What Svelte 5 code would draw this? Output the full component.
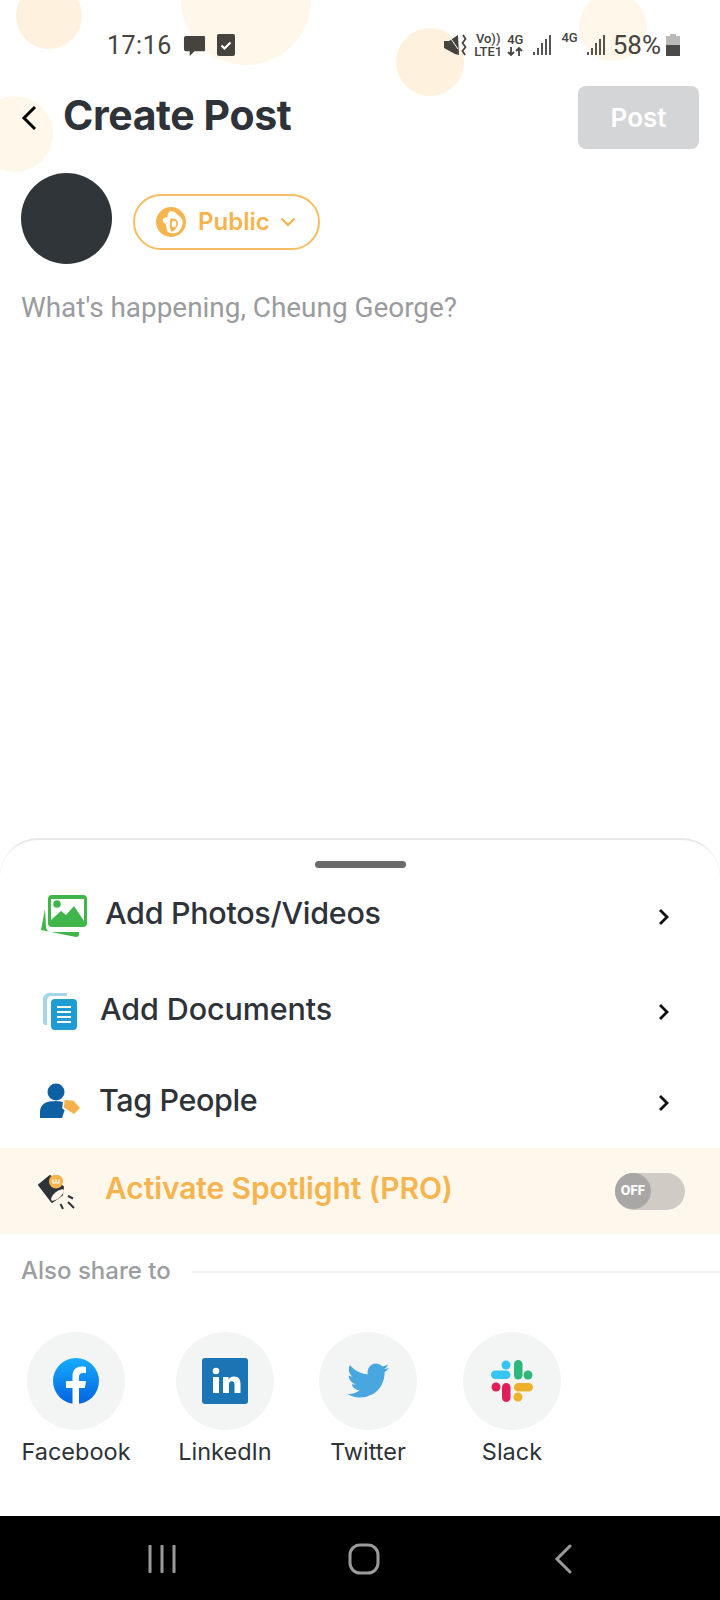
<script>
  const rows = [
    { label: "Add Photos/Videos", icon: "photos" },
    { label: "Add Documents", icon: "docs" },
    { label: "Tag People", icon: "tag" }
  ];
  const shares = ["Facebook", "LinkedIn", "Twitter", "Slack"];
  const bubbles = [
    { x: 49, y: 16, r: 33, c: "#fef1de" },
    { x: 246, y: 0, r: 65, c: "#fff7ea" },
    { x: 430, y: 62, r: 34, c: "#fef1de" },
    { x: 613, y: 27, r: 34, c: "#fff7ea" },
    { x: 15, y: 134, r: 38, c: "#fff7ea" }
  ];
</script>

<main class="page">
  {#each bubbles as b}
    <div class="bubble" style="left:{b.x - b.r}px;top:{b.y - b.r}px;width:{b.r * 2}px;height:{b.r * 2}px;background:{b.c}"></div>
  {/each}

  <div class="status">
    <div class="status-left">
      <span class="time">17:16</span>
      <svg width="23" height="23" viewBox="0 0 24 24"><path fill="#46433f" d="M3 2h19a1 1 0 0 1 1 1v14a1 1 0 0 1-1 1H12l-5 5v-5H3a2 2 0 0 1-2-2V4a2 2 0 0 1 2-2z"/></svg>
      <svg class="check" width="18" height="22" viewBox="0 0 18 22"><rect width="18" height="22" rx="2" fill="#46433f"/><path d="M4.500 11.500l3 3 6-6" fill="none" stroke="#fff" stroke-width="2.200"/></svg>
    </div>
    <div class="status-right">
      <svg class="mute" width="23" height="22" viewBox="0 0 23 22"><path fill="#46433f" d="M0 7h5l9-6 1 20-4-1L0 14z"/><path d="M5 2l9 13" stroke="#fff" stroke-width="1"/><path d="M19 1l2.500 4-3 4 3 4-3 4 2.500 4" fill="none" stroke="#46433f" stroke-width="1.800"/></svg>
      <div class="stack lte"><span>Vo))</span><span>LTE1</span></div>
      <div class="stack g">
        <span>4G</span>
        <svg width="16" height="9" viewBox="0 0 16 9"><path d="M4 0v8M1 5l3 3 3-3M12 9V1M9 4l3-3 3 3" fill="none" stroke="#46433f" stroke-width="1.800"/></svg>
      </div>
      <svg class="bars first" width="18" height="20" viewBox="0 0 18 20"><path d="M1 20v-3M5 20v-7M9 20V8M13 20V4M17 20V0" stroke="#46433f" stroke-width="1.800"/></svg>
      <span class="solo">4G</span>
      <svg class="bars" width="18" height="20" viewBox="0 0 18 20"><path d="M1 20v-3M5 20v-7M9 20V8M13 20V4M17 20V0" stroke="#46433f" stroke-width="1.800"/></svg>
      <span class="pct">58%</span>
      <svg width="14" height="22" viewBox="0 0 14 22"><path fill="#b9b9b8" d="M4 0h6v2h4v9H0V2h4z"/><rect y="11" width="14" height="11" fill="#4a4a4a"/></svg>
    </div>
  </div>

  <header class="head">
    <svg class="back" width="16" height="26" viewBox="0 0 16 26"><path d="M14 2L3 13l11 11" fill="none" stroke="#000" stroke-width="3"/></svg>
    <h1>Create Post</h1>
    <button class="post">Post</button>
  </header>

  <div class="author">
    <div class="avatar"></div>
    <div class="pill">
      <svg width="30" height="30" viewBox="0 0 30 30">
        <circle cx="15" cy="15" r="15" fill="#f6b44e"/>
        <path fill="#fff" d="M12.300 4.700C16 3.500 20 5 21.700 8c2.500 1.500 5 4 5 6.700 0 3-1 5-1.700 6.600-1.500 3-4 5-6.700 5-2.500 0-5.500-.5-6.600-1.600-1.500-2-1-4.700-1.700-6.700-1-2-3.300-3-3.300-5 0-2 3-2.500 5-3.300-.5-2 0-4 2.600-5z"/>
        <path fill="#f6b44e" d="M15 11.300c3 0 6 1 6.700 3.400.5 2.500-.2 5-1.700 6.600-1 1.500-2.800 3.400-4.300 3.400-1.500-1.500-1.700-4-1.700-6.700 0-2.500-.5-5 1-6.700z"/>
        <ellipse cx="18" cy="17" rx="2.200" ry="3.200" fill="#fff"/>
      </svg>
      <span>Public</span>
      <svg width="16" height="10" viewBox="0 0 16 10"><path d="M1.500 1.500L8 8l6.500-6.500" fill="none" stroke="#f6b44e" stroke-width="2.200"/></svg>
    </div>
  </div>

  <p class="placeholder">What's happening, Cheung George?</p>

  <section class="sheet">
    <div class="handle"></div>

    {#each rows as row}
      <div class="row {row.icon}">
        <div class="row-icon">
          {#if row.icon === "photos"}
            <svg width="48" height="46" viewBox="0 0 48 46">
              <path fill="#3fb54a" d="M5 15L1 36l35 7c2 0 3-1 3-3v-2H12c-4 0-6-2-6-6z"/>
              <rect x="8" y="1" width="39" height="32" rx="4" fill="#3fb54a"/>
              <path fill="#fff" d="M11 5h33v22L34 12l-8 9-5-4-10 9z"/>
              <circle cx="17" cy="10" r="3.800" fill="#3fb54a"/>
            </svg>
          {:else if row.icon === "docs"}
            <svg width="36" height="38" viewBox="0 0 36 38">
              <path fill="#a5d6e8" d="M6 0h18v3H8c-2 0-4 2-4 4v25H3c-2 0-3-1-3-3V6c0-3 3-6 6-6z"/>
              <rect x="8" y="6" width="26" height="31" rx="4" fill="#1f9dd3"/>
              <path d="M14 14h14M14 19h14M14 24h14M14 29h14" stroke="#fff" stroke-width="2.200"/>
            </svg>
          {:else}
            <svg width="42" height="36" viewBox="0 0 42 36">
              <circle cx="16" cy="9" r="8.500" fill="#0f5fa3"/>
              <path fill="#0f5fa3" d="M0 35v-6c0-8 6-11 16-11 4 0 8 1 11 2l-5 15z"/>
              <path fill="#f8b04c" stroke="#fff" stroke-width="1.500" stroke-linejoin="round" d="M24 16l10 1 7 8-7 7-11-7z"/>
            </svg>
          {/if}
        </div>
        <span class="row-label">{row.label}</span>
        <svg class="chev" width="12" height="18" viewBox="0 0 12 18"><path d="M2 2l7 7-7 7" fill="none" stroke="#111" stroke-width="2.800"/></svg>
      </div>
    {/each}

    <div class="spot">
      <svg width="38" height="36" viewBox="0 0 38 36">
        <path fill="#2e3239" stroke="#2e3239" stroke-width="2" stroke-linejoin="round" d="M1 10L12 1l13 11-1 8-10 7z"/>
        <ellipse cx="19.500" cy="20" rx="8" ry="3.200" transform="rotate(-40 19.500 20)" fill="#fef7ec"/>
        <circle cx="18" cy="6.500" r="7" fill="#f6b44e"/>
        <path d="M15 4.500v3.500h6V4.500M18 4.500V8" fill="none" stroke="#fff" stroke-width="1.200"/>
        <path d="M30 21l5 2.500M30 27l6 6M22.500 29l2.500 5" stroke="#2e3239" stroke-width="2"/>
      </svg>
      <span class="spot-label">Activate Spotlight (PRO)</span>
      <div class="toggle"><div class="knob">OFF</div></div>
    </div>

    <div class="also">
      <span>Also share to</span>
      <div class="line"></div>
    </div>

    <div class="shares">
      {#each shares as s}
        <div class="share">
          <div class="disc">
            {#if s === "Facebook"}
              <svg width="46" height="46" viewBox="0 0 46 46">
                <defs><linearGradient id="fb" x1="0" y1="0" x2="0" y2="1"><stop offset="0" stop-color="#18acfe"/><stop offset="1" stop-color="#0163e0"/></linearGradient></defs>
                <circle cx="23" cy="23" r="23" fill="url(#fb)"/>
                <path fill="#fff" d="M19.500 46V30H13v-7h6.500v-5c0-6 3.500-9.500 9-9.500 2.500 0 4.500.4 4.500.4v6h-3c-3 0-4 1.800-4 3.800V23h7l-1.100 7H26v16z"/>
              </svg>
            {:else if s === "LinkedIn"}
              <svg width="46" height="46" viewBox="0 0 46 46">
                <rect width="46" height="46" rx="3" fill="#1b74b3"/>
                <circle cx="14" cy="13" r="3.300" fill="#fff"/>
                <path fill="#fff" d="M11 19h6v16h-6zM21 19h5.500v2.300c1-1.700 3-2.800 5.500-2.800 5 0 6.500 3 6.500 7.500V35h-6v-8c0-2.300-.6-3.800-2.800-3.800S27 24.800 27 27v8h-6z"/>
              </svg>
            {:else if s === "Twitter"}
              <svg width="42" height="36" viewBox="0 0 24 20">
                <path fill="#48a6e0" d="M24 2.400c-.9.4-1.800.7-2.800.8 1-.6 1.800-1.600 2.200-2.700-1 .6-2 1-3.100 1.200A4.900 4.900 0 0 0 11.900 6.200C7.800 6 4.200 4 1.700.9c-1.300 2.200-.7 5.100 1.500 6.600-.8 0-1.600-.2-2.200-.6 0 2.400 1.700 4.400 3.900 4.900-.7.200-1.500.2-2.200.1.600 2 2.400 3.400 4.600 3.400A9.900 9.900 0 0 1 0 17.300 14 14 0 0 0 21.500 4.900c1-.7 1.800-1.500 2.500-2.500z"/>
              </svg>
            {:else}
              <svg width="42" height="42" viewBox="0 0 42 42">
                <g fill="#36c5f0"><circle cx="15" cy="5" r="4.500" /><rect x="0" y="10.500" width="19.500" height="8.500" rx="4.250"/></g>
                <g fill="#2eb67d"><rect x="23" y="0" width="8.500" height="19.500" rx="4.250"/><circle cx="37" cy="15" r="4.500"/></g>
                <g fill="#ecb22e"><rect x="23" y="23" width="19" height="8.500" rx="4.250"/><circle cx="27" cy="37" r="4.500"/></g>
                <g fill="#e01e5a"><rect x="11" y="23" width="8.500" height="19" rx="4.250"/><circle cx="5" cy="27" r="4.500"/></g>
              </svg>
            {/if}
          </div>
          <span class="share-label">{s}</span>
        </div>
      {/each}
    </div>
  </section>

  <nav class="nav">
    <svg width="28" height="28" viewBox="0 0 28 28"><path d="M2 1v26M14 1v26M26 1v26" stroke="#9b9b9b" stroke-width="3" stroke-linecap="round"/></svg>
    <svg class="home" width="32" height="32" viewBox="0 0 32 32"><rect x="2" y="2" width="28" height="28" rx="10" fill="none" stroke="#9b9b9b" stroke-width="3"/></svg>
    <svg width="18" height="30" viewBox="0 0 18 30"><path d="M16 2L3 15l13 13" fill="none" stroke="#9b9b9b" stroke-width="3" stroke-linecap="round"/></svg>
  </nav>
</main>

<style>
  :global(body) {
    margin: 0;
    background: #fff;
  }

  .page {
    position: relative;
    width: 720px;
    height: 1600px;
    overflow: hidden;
    display: flex;
    flex-direction: column;
    font-family: Inter, "Liberation Sans", sans-serif;
    color: #2e3239;
  }

  .bubble {
    position: absolute;
    border-radius: 50%;
  }

  .status {
    position: relative;
    height: 86px;
    padding: 30px 40px 0 107px;
    box-sizing: border-box;
    display: flex;
    justify-content: space-between;
    align-items: flex-start;
    color: #46433f;
    font-family: Roboto, sans-serif;
  }

  .status-left {
    display: flex;
    align-items: center;
    gap: 11px;
    height: 30px;
  }

  .time {
    font-size: 25px;
    letter-spacing: 0.5px;
  }

  .status-right {
    display: flex;
    align-items: center;
    height: 30px;
  }

  .stack {
    display: flex;
    flex-direction: column;
    align-items: center;
    font-size: 13px;
    font-weight: 500;
    line-height: 13px;
  }

  .lte {
    margin-left: 7px;
  }

  .g {
    margin-left: 5px;
    gap: 1px;
  }

  .g span {
    line-height: 12px;
  }

  .bars {
    margin-left: 9px;
  }

  .bars.first {
    margin-left: 10px;
  }

  .solo {
    align-self: flex-start;
    margin: 1px 0 0 10px;
    font-size: 13px;
    font-weight: 500;
    line-height: 14px;
  }

  .pct {
    font-size: 26px;
    margin: 0 5px 0 8px;
  }

  .head {
    position: relative;
    display: flex;
    align-items: center;
    height: 63px;
    padding: 0 21px;
  }

  .back {
    margin-right: 26px;
    flex: none;
  }

  h1 {
    margin: 0 0 6px;
    flex: 1;
    font-size: 41px;
    font-weight: 700;
    letter-spacing: -0.4px;
  }

  .post {
    width: 121px;
    height: 63px;
    border: 0;
    border-radius: 8px;
    background: #d4d5d7;
    color: #fff;
    font-family: inherit;
    font-size: 26px;
    font-weight: 600;
  }

  .author {
    position: relative;
    display: flex;
    align-items: center;
    gap: 21px;
    margin-top: 24px;
    padding-left: 21px;
  }

  .avatar {
    width: 91px;
    height: 91px;
    border-radius: 50%;
    background: #2f3539;
  }

  .pill {
    display: flex;
    align-items: center;
    width: 187px;
    height: 56px;
    box-sizing: border-box;
    padding-left: 21px;
    border: 2px solid #f6bd63;
    border-radius: 28px;
    color: #f6b44e;
    font-size: 24px;
    font-weight: 600;
    gap: 12px;
    margin-top: 6px;
  }

  .pill span {
    margin-right: -2px;
  }

  .placeholder {
    margin: 24px 0 0 21px;
    font-family: Roboto, sans-serif;
    font-size: 27.900px;
    line-height: 40px;
    color: #9a9b9e;
  }

  .sheet {
    position: absolute;
    left: 0;
    right: 0;
    top: 838px;
    height: 678px;
    box-sizing: border-box;
    border-top: 2px solid #e8e8e8;
    border-radius: 38px 38px 0 0;
    background: #fff;
  }

  .handle {
    width: 91px;
    height: 7px;
    margin: 21px auto 0;
    border-radius: 4px;
    background: #6b6b6b;
  }

  .row {
    display: flex;
    align-items: center;
    padding-right: 50px;
    font-size: 30.500px;
    font-weight: 500;
  }

  .row.photos {
    margin-top: 5px;
    height: 88px;
  }

  .row.docs {
    height: 102px;
  }

  .row.tag {
    height: 85px;
    margin-top: -5px;
  }

  .row-icon {
    width: 100px;
    flex: none;
    display: flex;
    padding-left: 40px;
    box-sizing: border-box;
  }

  .photos .row-icon {
    width: 105px;
  }

  .docs .row-icon {
    padding-left: 43px;
  }

  .row-label {
    flex: 1;
    letter-spacing: -0.3px;
  }

  .photos .row-label {
    padding-bottom: 10px;
  }

  .docs .row-label {
    padding-bottom: 8px;
    letter-spacing: -0.1px;
  }

  .tag .row-label {
    padding-bottom: 2px;
    letter-spacing: -0.4px;
    margin-left: -1px;
  }

  .chev {
    flex: none;
    margin-top: -1px;
  }

  .tag .chev {
    margin-top: 5px;
  }

  .spot {
    display: flex;
    align-items: center;
    height: 86px;
    padding: 0 35px 0 38px;
    background: #fef7ec;
    margin-top: 5px;
  }

  .spot svg {
    flex: none;
    margin: 4px 29px 0 0;
  }

  .spot-label {
    flex: 1;
    padding-bottom: 6px;
    color: #f6b44e;
    font-size: 30px;
    font-weight: 600;
    letter-spacing: -0.1px;
  }

  .toggle {
    width: 70px;
    height: 37px;
    border-radius: 19px;
    background: #d0ccc5;
    display: flex;
    align-items: center;
  }

  .knob {
    width: 36px;
    height: 36px;
    border-radius: 50%;
    background: #a9a7a5;
    color: #fff;
    font-size: 12.500px;
    font-weight: 800;
    text-align: center;
    line-height: 36px;
  }

  .also {
    display: flex;
    align-items: center;
    gap: 21px;
    margin-top: 22px;
    padding-left: 21px;
    color: #9a9da1;
    font-size: 24px;
    font-weight: 500;
  }

  .line {
    flex: 1;
    height: 2px;
    background: #eff0f1;
    margin-top: 3px;
  }

  .shares {
    display: flex;
    margin-top: 47px;
    padding-left: 27px;
  }

  .share {
    position: relative;
    width: 98px;
    margin-right: 46px;
    display: flex;
    flex-direction: column;
    align-items: center;
  }

  .share:nth-child(1) {
    margin-right: 51px;
  }

  .share:nth-child(2) {
    margin-right: 45px;
  }

  .disc {
    width: 98px;
    height: 98px;
    border-radius: 50%;
    background: #f3f5f5;
    display: flex;
    align-items: center;
    justify-content: center;
  }

  .share-label {
    margin-top: 4px;
    font-size: 23.500px;
    line-height: 36px;
    white-space: nowrap;
    color: #2e3239;
  }

  .nav {
    position: absolute;
    left: 0;
    right: 0;
    bottom: 0;
    height: 84px;
    background: #000;
    display: flex;
    align-items: center;
    justify-content: space-between;
    padding: 2px 148px 0 148px;
    box-sizing: border-box;
  }

  .home {
    margin-right: 3px;
  }
</style>
